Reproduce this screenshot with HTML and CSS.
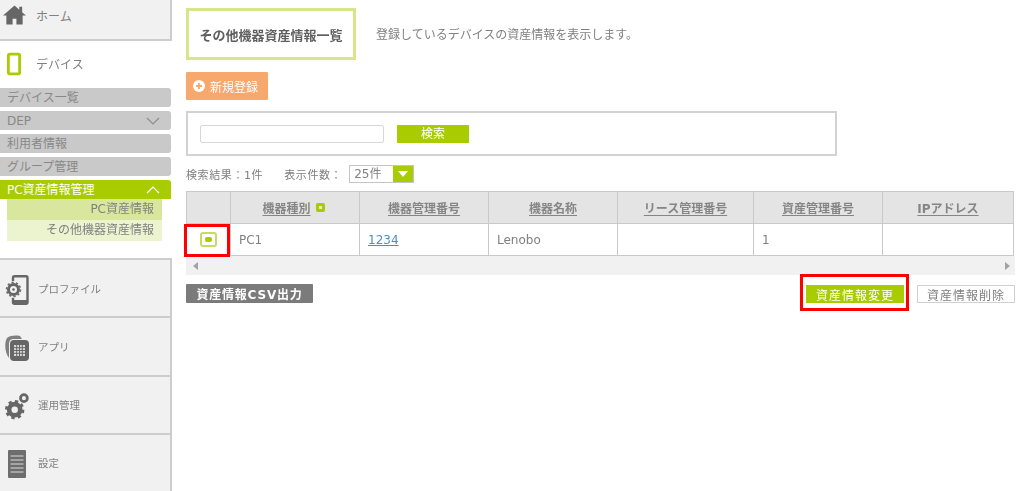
FILE: index.html
```html
<!DOCTYPE html>
<html lang="ja">
<head>
<meta charset="utf-8">
<title>その他機器資産情報一覧</title>
<link rel="stylesheet" href="styles.css">
</head>
<body>
<div class="app">
  <nav class="side">
    <a class="nav nav-home">
      <svg class="ico-home" viewBox="0 0 24 20"><path fill="#666" d="M12 0 0 10.500h3.500V20H10v-6h4v6h6.500v-9.500H24L20 7V1.500h-3v3z"/></svg>
      <span>ホーム</span>
    </a>
    <a class="nav-device">
      <svg class="ico-device" viewBox="0 0 15 24"><rect x="1.500" y="1.500" width="12" height="21" rx="1.500" fill="#fff" stroke="#a9cc00" stroke-width="3"/></svg>
      <span>デバイス</span>
    </a>
    <div class="subs">
      <a class="sub">デバイス一覧</a>
      <a class="sub">DEP<svg class="chev" viewBox="0 0 14 8"><path d="M1 1l6 6 6-6" fill="none" stroke="#8d8d8d" stroke-width="1.200"/></svg></a>
      <a class="sub">利用者情報</a>
      <a class="sub">グループ管理</a>
      <a class="sub sub-on">PC資産情報管理<svg class="chev" viewBox="0 0 14 8"><path d="M1 7l6-6 6 6" fill="none" stroke="#fff" stroke-width="1.200"/></svg></a>
    </div>
    <div class="leafs">
      <a class="leaf leaf-a">PC資産情報</a>
      <a class="leaf leaf-b">その他機器資産情報</a>
    </div>
    <div class="navs">
      <a class="nav">
        <svg class="ico" viewBox="0 0 24 30"><rect x="8" y="1.200" width="14.500" height="27.600" rx="1.500" fill="none" stroke="#666" stroke-width="2.400"/><rect x="8" y="25" width="14.500" height="4" fill="#666"/><circle cx="8.500" cy="14.500" r="8.500" fill="#f1f1f1"/><circle cx="8.500" cy="14.500" r="5" fill="none" stroke="#666" stroke-width="3"/><circle cx="8.500" cy="14.500" r="7" fill="none" stroke="#666" stroke-width="1.500" stroke-dasharray="2.200 2.200"/><circle cx="8.500" cy="14.500" r="1.300" fill="#666"/></svg>
        <span>プロファイル</span>
      </a>
      <a class="nav">
        <svg class="ico" viewBox="0 0 24 26"><path fill="#808080" d="M2 3c3-2.500 9-3 13-2l2 3H8C5 4 4 7 4 9v14C0 18-1 8 2 3z"/><rect x="5" y="5" width="19" height="21" rx="4" fill="#666"/><rect x="9" y="10" width="11" height="11" fill="#d8d8d8"/><path stroke="#666" stroke-width="1" d="M11.700 10v11M14.500 10v11M17.300 10v11M9 12.700h11M9 15.500h11M9 18.300h11"/></svg>
        <span>アプリ</span>
      </a>
      <a class="nav">
        <svg class="ico" viewBox="0 0 26 30"><g fill="none" stroke="#666"><circle cx="10.500" cy="19" r="6" stroke-width="5"/><circle cx="10.500" cy="19" r="9" stroke-width="3" stroke-dasharray="3.500 3.570"/><circle cx="20.500" cy="6.500" r="3.700" stroke-width="3"/></g></svg>
        <span>運用管理</span>
      </a>
      <a class="nav">
        <svg class="ico" viewBox="0 0 24 30"><rect x="3" y="1" width="18" height="28" rx="1" fill="#6d6d6d"/><path stroke="#ddd" stroke-width="1" d="M5.500 7h13M5.500 11h13M5.500 15h13M5.500 19h13M5.500 23h13"/></svg>
        <span>設定</span>
      </a>
    </div>
  </nav>

  <main class="main">
    <header class="head">
      <h1 class="title">その他機器資産情報一覧</h1>
      <p class="desc">登録しているデバイスの資産情報を表示します。</p>
    </header>
    <button class="btn-new"><svg class="plus" viewBox="0 0 12 12"><circle cx="6" cy="6" r="6" fill="#fff"/><path d="M6 3v6M3 6h6" stroke="#f7a86d" stroke-width="1.800"/></svg>新規登録</button>
    <div class="search">
      <input class="search-input" type="text">
      <button class="btn-search">検索</button>
    </div>
    <div class="result">
      <span>検索結果：1件</span>
      <span class="count-label">表示件数：</span>
      <span class="select"><span class="select-val">25件</span><span class="select-arrow"><i class="tri"></i></span></span>
    </div>
    <table class="grid">
      <colgroup><col class="c0"><col class="c1"><col class="c1"><col class="c1"><col class="c3"><col class="c1"><col class="c4"></colgroup>
      <thead>
        <tr>
          <th></th>
          <th class="th-sort"><u>機器種別</u><i class="sort"></i></th>
          <th><u>機器管理番号</u></th>
          <th><u>機器名称</u></th>
          <th><u>リース管理番号</u></th>
          <th><u>資産管理番号</u></th>
          <th><u>IPアドレス</u></th>
        </tr>
      </thead>
      <tbody>
        <tr>
          <td class="check-cell"><i class="check"><b></b></i></td>
          <td>PC1</td>
          <td><a class="link">1234</a></td>
          <td>Lenobo</td>
          <td></td>
          <td>1</td>
          <td></td>
        </tr>
      </tbody>
    </table>
    <div class="scroll"><i class="tri-l"></i><i class="tri-r"></i></div>
    <div class="actions">
      <button class="btn-csv">資産情報CSV出力</button>
      <div class="actions-right">
        <button class="btn-change">資産情報変更</button>
        <button class="btn-del">資産情報削除</button>
      </div>
    </div>
    <div class="mark mark-check"></div>
    <div class="mark mark-change"></div>
  </main>
</div>
</body>
</html>
```

FILE: styles.css
```css
* { box-sizing: border-box; }
html, body { margin: 0; height: 491px; overflow: hidden; background: #fff; }
body {
  font-family: "DejaVu Sans", "Noto Sans CJK JP", sans-serif;
  font-size: 12px;
  color: #777;
}
.app { display: flex; height: 491px; filter: blur(0.55px); }
a { display: block; }
button { font-family: inherit; cursor: pointer; }

.side { width: 172px; flex: none; display: flex; flex-direction: column; }
.nav {
  display: flex; align-items: center; gap: 9px;
  background: #f1f1f1;
  border-right: 2px solid #cdcdcd;
  border-bottom: 2px solid #cdcdcd;
  padding-left: 5px;
  flex: 1;
  color: #808080;
  font-size: 10.500px;
}
.nav-home { flex: none; height: 41px; padding-left: 3px; gap: 10px; padding-bottom: 9px; font-size: 12px; }
.ico-home { width: 23px; height: 20px; }
.nav-device { display: flex; align-items: center; height: 47px; padding: 0 0 2px 7px; gap: 15px; color: #808080; background: #fff; }
.ico-device { width: 14px; height: 24px; }
.subs { display: flex; flex-direction: column; gap: 4px; padding-right: 1px; }
.sub {
  height: 19px; line-height: 18px; background: #c9c9c9; color: #888;
  border-radius: 0 3px 3px 0; padding-left: 7px; position: relative;
  display: flex; justify-content: space-between; align-items: center; padding-right: 11px;
}
.sub-on { background: #a9cc00; color: #fff; border-radius: 0 3px 0 0; }
.chev { width: 14px; height: 8px; }
.leafs { margin-left: 7px; width: 155px; }
.leaf { height: 21px; line-height: 21px; text-align: right; padding-right: 8px; color: #808080; }
.leaf-a { background: #d9e69d; }
.leaf-b { background: #ebf3cf; }
.navs { margin-top: 17px; flex: 1; display: flex; flex-direction: column; border-top: 2px solid #cdcdcd; }
.navs .nav:last-child { border-bottom: 0; }
.ico { width: 24px; height: 30px; flex: none; margin-top: 3px; }

.main { flex: 1; position: relative; padding: 8px 9px 0 14px; min-width: 0; }
.head { display: flex; align-items: center; gap: 20px; }
.title {
  margin: 0; width: 170px; height: 52px; border: 3px solid #d6e68a;
  display: flex; align-items: center; justify-content: center;
  font-size: 13px; font-weight: 700; color: #5f5f5f; white-space: nowrap;
}
.desc { margin: 0 0 2px; font-size: 12px; color: #808080; }
.btn-new {
  margin-top: 12px; display: flex; align-items: center; gap: 5px;
  width: 82px; height: 28px; padding: 0 0 0 7px;
  background: #f7a86d; color: #fff; border: 0; border-radius: 1px; font-size: 12px;
}
.plus { width: 12px; height: 12px; }
.search {
  margin-top: 11px; width: 651px; height: 45px;
  border: 2px solid #d2d2d2; display: flex; align-items: center; padding: 0 0 0 12px; gap: 13px;
}
.search-input { width: 184px; height: 18px; border: 1px solid #d8d8d8; border-radius: 2px; background: #fff; }
.btn-search { width: 72px; height: 18px; padding: 0; border: 0; background: #a9cc00; color: #fff; font-size: 12px; line-height: 18px; }
.result { margin-top: 8px; height: 19px; display: flex; align-items: center; font-size: 11px; letter-spacing: 0.6px; color: #808080; }
.count-label { margin-left: 21px; margin-right: 7px; }
.select { width: 65px; height: 18px; border: 1px solid #c4c4c4; display: flex; justify-content: space-between; font-size: 12px; letter-spacing: 0; line-height: 16px; }
.select-val { padding-left: 4px; }
.select-arrow { width: 20px; background: #a9cc00; display: flex; align-items: center; justify-content: center; }
.tri { width: 0; height: 0; border-left: 5px solid transparent; border-right: 5px solid transparent; border-top: 6px solid #fff; }

.grid { margin-top: 8px; width: 828px; table-layout: fixed; border-collapse: collapse; }
.c0 { width: 44px; }
.c1 { width: 129px; }
.c3 { width: 136px; }
.c4 { width: 131px; }
.grid th, .grid td { border: 1px solid #c9c9c9; }
.grid th { height: 32px; background: #e4e4e4; color: #858585; font-size: 12px; font-weight: 700; padding: 0; }
.grid .th-sort { padding-right: 3px; }
.grid td { height: 32px; padding: 0 0 0 8px; font-size: 12px; color: #808080; }
.grid u { text-underline-offset: 2px; }
.sort { display: inline-block; width: 9px; height: 9px; margin-left: 5px; background: #a9cc00; border-radius: 2px; position: relative; top: -1px; box-shadow: inset 0 0 0 3px #a9cc00, inset 0 0 0 5px #e6efb5; }
.check-cell { text-align: center; }
.grid .check-cell { padding: 0; }
.check { display: inline-flex; align-items: center; justify-content: center; width: 17px; height: 15px; border: 2px solid #c6dc60; border-radius: 3px; vertical-align: middle; }
.check b { width: 7px; height: 5px; background: #a9cc00; border-radius: 2px; }
.link { color: #4a8fc4; text-decoration: underline; font-size: 12px; display: inline; }
.scroll { width: 829px; height: 19px; background: #f1f1f1; display: flex; justify-content: space-between; align-items: center; padding: 0 5px 0 7px; }
.tri-l { width: 0; height: 0; border-top: 4px solid transparent; border-bottom: 4px solid transparent; border-right: 5px solid #a3a3a3; }
.tri-r { width: 0; height: 0; border-top: 4px solid transparent; border-bottom: 4px solid transparent; border-left: 5px solid #a3a3a3; }
.actions { margin-top: 9px; width: 829px; display: flex; justify-content: space-between; align-items: flex-start; }
.actions-right { display: flex; gap: 13px; margin-top: 1px; }
.btn-csv { width: 127px; height: 19px; padding: 0; border: 0; border-radius: 1px; background: #7b7b7b; color: #fff; font-weight: 700; font-size: 12px; letter-spacing: 0.8px; }
.btn-change { width: 98px; height: 18px; padding: 0; border: 0; background: #a9cc00; color: #fff; font-size: 12px; letter-spacing: 1px; }
.btn-del { width: 98px; height: 18px; padding: 0; border: 1px solid #d0d0d0; background: #fff; color: #808080; font-size: 12px; letter-spacing: 1px; }
.mark { position: absolute; border: 3px solid #f00; }
.mark-check { left: 12px; top: 224px; width: 46px; height: 33px; }
.mark-change { left: 628px; top: 274px; width: 109px; height: 37px; }
```
